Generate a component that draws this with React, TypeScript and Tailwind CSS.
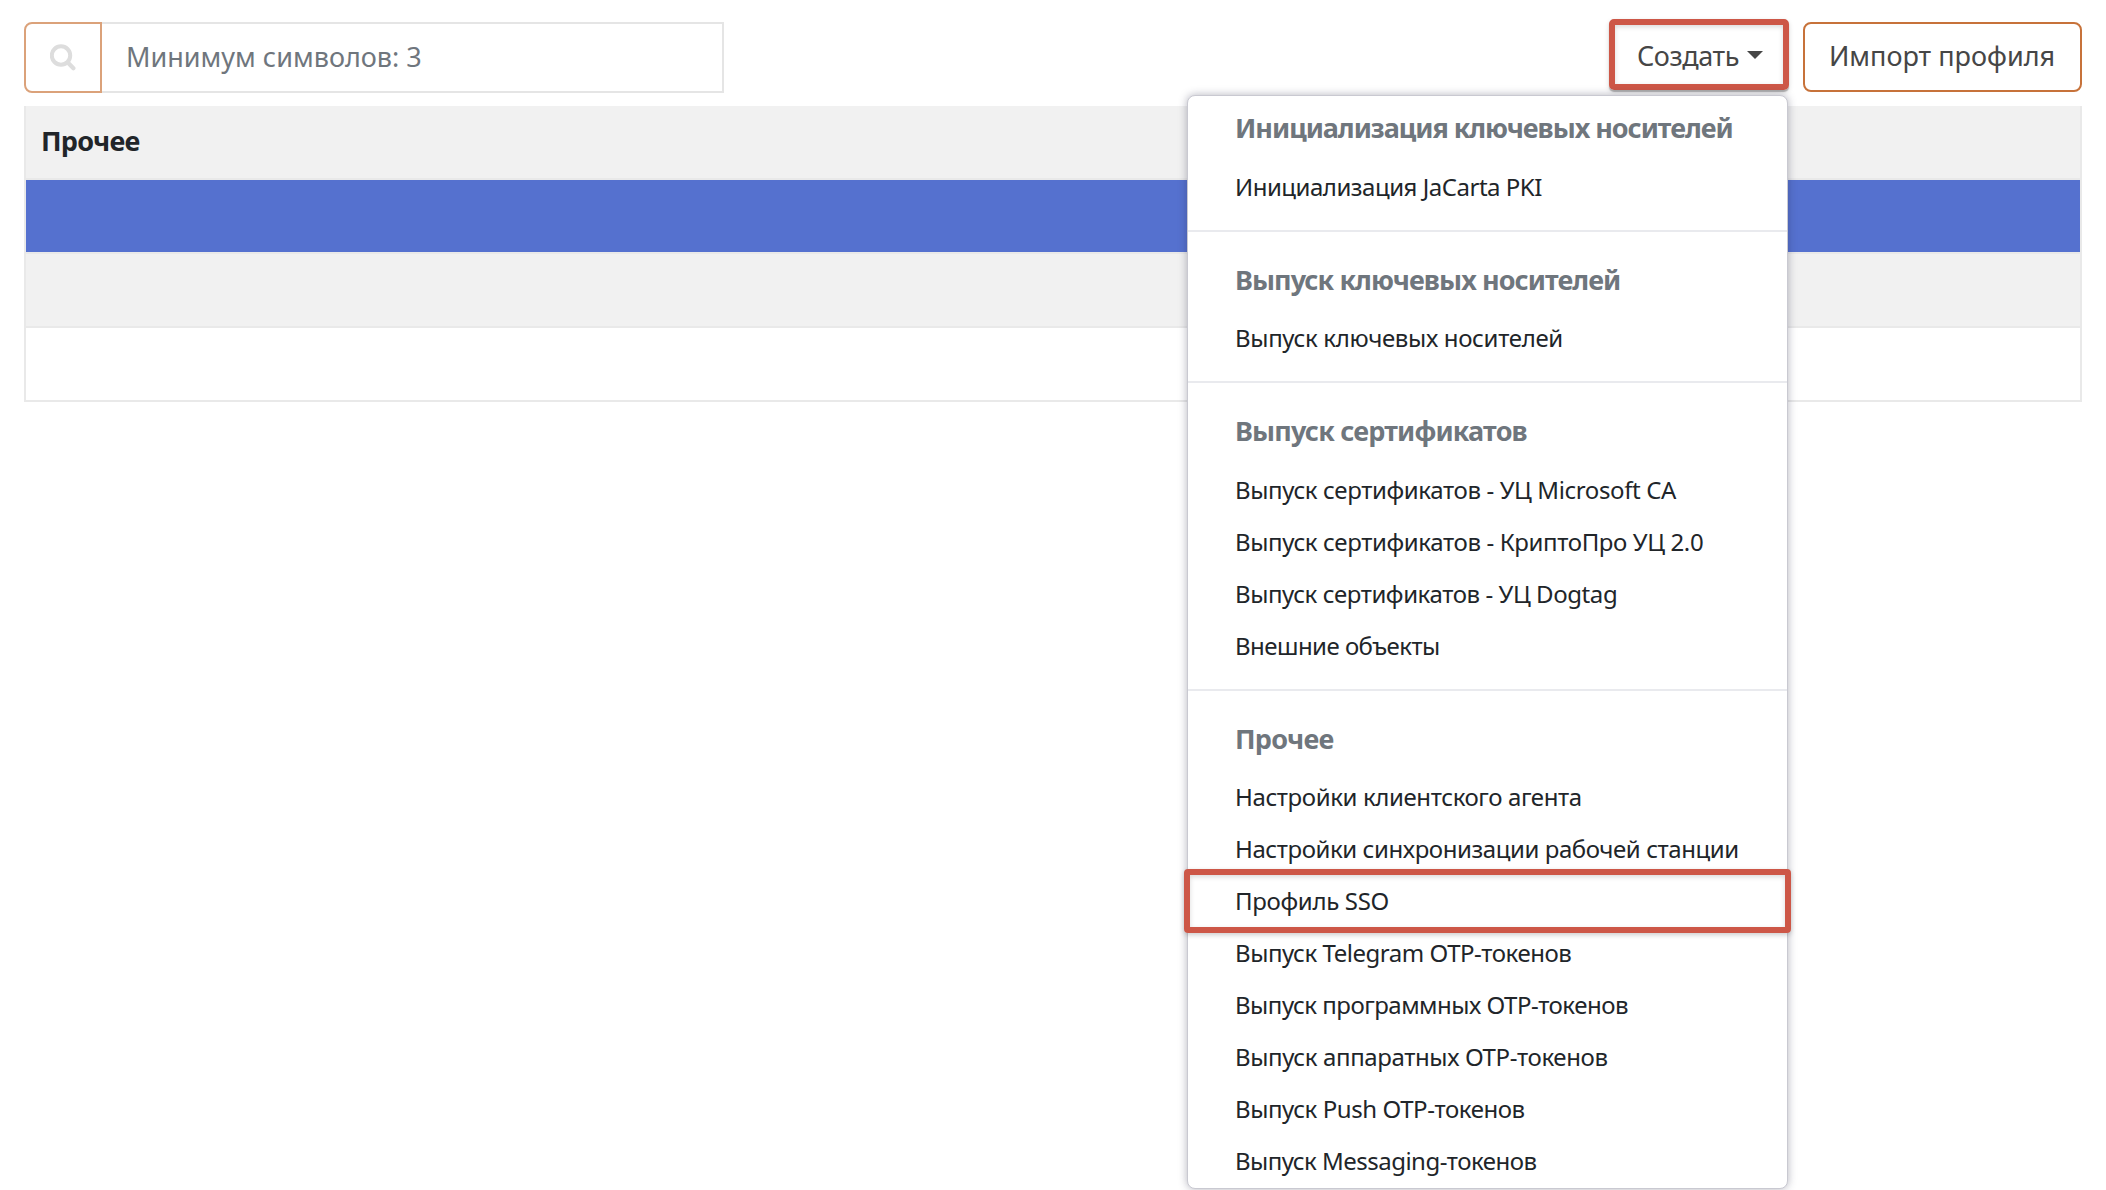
import { JSX } from "react/jsx-runtime";

const sections = [
  {
    title: "Инициализация ключевых носителей",
    titleClass: "h-[66px] tracking-[-1.04px]",
    items: [
      { name: "Инициализация JaCarta PKI", tracking: "tracking-[-0.48px]" },
    ],
  },
  {
    title: "Выпуск ключевых носителей",
    titleClass: "h-[65px] tracking-[-0.93px]",
    items: [
      { name: "Выпуск ключевых носителей", tracking: "tracking-[-0.33px]" },
    ],
  },
  {
    title: "Выпуск сертификатов",
    titleClass: "h-[66px] tracking-[-0.82px]",
    items: [
      {
        name: "Выпуск сертификатов - УЦ Microsoft CA",
        tracking: "tracking-[-0.37px]",
      },
      {
        name: "Выпуск сертификатов - КриптоПро УЦ 2.0",
        tracking: "tracking-[-0.37px]",
      },
      {
        name: "Выпуск сертификатов - УЦ Dogtag",
        tracking: "tracking-[-0.42px]",
      },
      { name: "Внешние объекты", tracking: "tracking-[-0.53px]" },
    ],
  },
  {
    title: "Прочее",
    titleClass: "h-[65px] tracking-[-0.75px]",
    items: [
      { name: "Настройки клиентского агента", tracking: "tracking-[-0.39px]" },
      {
        name: "Настройки синхронизации рабочей станции",
        tracking: "tracking-[-0.42px]",
      },
      { name: "Профиль SSO", tracking: "tracking-[-0.33px]" },
      { name: "Выпуск Telegram OTP-токенов", tracking: "tracking-[-0.46px]" },
      {
        name: "Выпуск программных OTP-токенов",
        tracking: "tracking-[-0.49px]",
      },
      { name: "Выпуск аппаратных OTP-токенов", tracking: "tracking-[-0.38px]" },
      { name: "Выпуск Push OTP-токенов", tracking: "tracking-[-0.42px]" },
      { name: "Выпуск Messaging-токенов", tracking: "tracking-[-0.52px]" },
    ],
  },
];

const selectedItem = "Профиль SSO";

const SearchIcon = (): JSX.Element => (
  <svg className="h-[27px] w-[26px]" viewBox="0 0 26 27" fill="none">
    <circle cx="11" cy="11.5" r="9.2" stroke="currentColor" strokeWidth="4" />
    <path
      d="M17.8 18.5l5.6 5.8"
      stroke="currentColor"
      strokeWidth="4.2"
      strokeLinecap="round"
    />
  </svg>
);

const CreateMenu = (): JSX.Element => (
  <div className="absolute -right-px top-[73px] z-10 w-[601px] rounded-lg border border-[#c9c9d1] bg-white shadow-[0_0_8px_rgba(40,40,70,0.35)]">
    {sections.map((section, index) => (
      <div key={section.title}>
        {index > 0 && <div className="my-4 h-0.5 bg-[#e9eaee]" />}
        <h6
          className={`whitespace-nowrap pl-[47px] pt-[14px] text-[27px] font-bold leading-[36px] text-[#6f767d] ${section.titleClass}`}
        >
          {section.title}
        </h6>
        {section.items.map((item) => (
          <div
            key={item.name}
            className={`relative flex h-[52px] items-center whitespace-nowrap pb-0.5 pl-[47px] text-[24px] text-[#212529] ${item.tracking}`}
          >
            {item.name}
            {item.name === selectedItem && (
              <div className="absolute -inset-x-1 -bottom-[5px] -top-[7px] rounded-[4px] border-[6px] border-[#cd5747] shadow-[0_2px_5px_rgba(0,0,0,0.2),inset_0_2px_5px_rgba(0,0,0,0.15)]" />
            )}
          </div>
        ))}
      </div>
    ))}
  </div>
);

const App = (): JSX.Element => {
  return (
    <div className="h-[1190px] overflow-hidden bg-white px-6 pt-[22px] font-['Noto_Sans',sans-serif]">
      <div className="flex h-[84px] items-start justify-between">
        <div className="flex h-[71px] w-[700px]">
          <button className="flex w-[78px] items-center justify-center rounded-l-lg border-2 border-[#dba27a] text-[#dddddd]">
            <SearchIcon />
          </button>
          <input
            className="flex-1 border-2 border-l-0 border-[#e5e5e5] pl-6 text-[27px] placeholder:text-[#6f767d]"
            placeholder="Минимум символов: 3"
          />
        </div>

        <div className="flex h-[70px]">
          <div className="relative mr-4 w-[177px]">
            <button className="-mt-[3px] -ml-[1px] flex h-[71px] w-[180px] items-center justify-center gap-2 rounded-[5px] border-[6px] border-[#cd5747] pl-0.5 pt-[3px] text-[27px] tracking-[-0.4px] text-[#464646] shadow-[0_2px_1px_rgba(0,0,0,0.25),0_2px_5px_rgba(0,0,0,0.15),inset_0_2px_5px_rgba(0,0,0,0.15)]">
              Создать
              <svg className="mb-0.5 h-2 w-4" viewBox="0 0 16 8">
                <path d="M0 0h16l-8 8z" fill="currentColor" />
              </svg>
            </button>
            <CreateMenu />
          </div>
          <button className="w-[279px] rounded-lg border-2 border-[#c7723a] pb-0.5 pr-px text-[27px] text-[#464646]">
            Импорт профиля
          </button>
        </div>
      </div>

      <div className="border-x-2 border-b-2 border-[#e9e9e9]">
        <div className="flex h-[74px] items-center border-b-2 border-[#e9e9e9] bg-[#f1f1f1] pb-0.5 pl-[15px] text-[27px] font-bold tracking-[-0.75px] text-[#212529]">
          Прочее
        </div>
        <div className="h-[72px] bg-[#5571cf]" />
        <div className="h-[76px] border-y-2 border-[#e9e9e9] bg-[#f1f1f1]" />
        <div className="h-[72px]" />
      </div>
    </div>
  );
};

export default App;
